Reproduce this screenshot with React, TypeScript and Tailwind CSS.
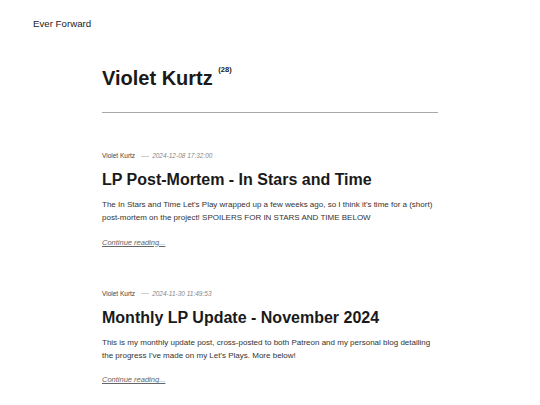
const posts = [
  {
    author: 'Violet Kurtz',
    date: '2024-12-08 17:32:00',
    title: 'LP Post-Mortem - In Stars and Time',
    excerpt:
      "The In Stars and Time Let's Play wrapped up a few weeks ago, so I think it's time for a (short) post-mortem on the project! SPOILERS FOR IN STARS AND TIME BELOW",
  },
  {
    author: 'Violet Kurtz',
    date: '2024-11-30 11:49:53',
    title: 'Monthly LP Update - November 2024',
    excerpt:
      "This is my monthly update post, cross-posted to both Patreon and my personal blog detailing the progress I've made on my Let's Plays. More below!",
  },
];

export default function App() {
  return (
    <div className="min-h-[405px] bg-white text-[#222] font-['Liberation_Sans',Arial,sans-serif]">
      {/* Header */}
      <header className="pl-[33px] pt-[18px]">
        <a className="block text-[9.7px] leading-[12px] text-[#222]">Ever Forward</a>
      </header>

      <main className="ml-[102px] w-[336px] pt-[36px]">
        <h1 className="text-[20px] leading-[24px] font-bold text-[#1a1a1a]">
          Violet Kurtz{' '}
          <sup className="text-[7.5px] font-bold align-[9px]">(28)</sup>
        </h1>
        <hr className="mt-[22px] border-0 h-px bg-[#aaa]" />

        <div className="mt-[38px] flex flex-col gap-[41px]">
          {posts.map((p) => (
            <article key={p.date}>
              <div className="flex items-center text-[6.5px] leading-[10px]">
                <span className="text-[#444]">{p.author}</span>
                <span className="ml-[6px] w-[8px] h-px bg-[#ccc]" />
                <span className="ml-[3px] italic text-[#888]">{p.date}</span>
              </div>
              <h2 className="mt-[9px] text-[16px] leading-[20px] font-bold text-[#1a1a1a]">
                {p.title}
              </h2>
              <p className="mt-[8px] text-[8px] leading-[13.3px] text-[#333]">{p.excerpt}</p>
              <a className="block mt-[13px] text-[7.5px] leading-[10px] italic underline text-[#666]">
                Continue reading...
              </a>
            </article>
          ))}
        </div>
      </main>
    </div>
  );
}
